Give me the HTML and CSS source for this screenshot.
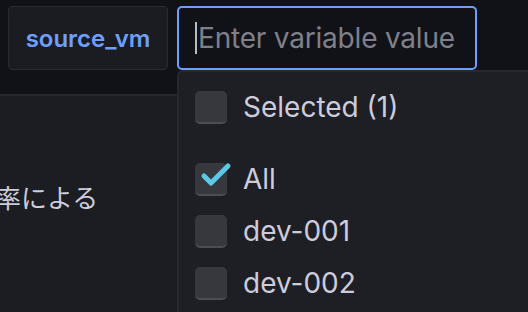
FILE: index.html
```html
<!DOCTYPE html>
<html lang="ja">
<head>
    <meta charset="UTF-8">
    <meta name="viewport" content="width=device-width, initial-scale=1.0">
    <title>Variable picker</title>
    <link rel="stylesheet" href="styles.css">
</head>
<body>

<div class="page">
    <!-- Variable toolbar -->
    <div class="toolbar">
        <div class="var-label">source_vm</div>
        <div class="var-input">
            <span class="caret"></span>
            <span class="placeholder">Enter variable value</span>
        </div>
    </div>

    <!-- Panel below the toolbar -->
    <div class="panel">
        <p class="panel-title">効率による</p>
    </div>

    <!-- Options menu -->
    <div class="menu">
        <div class="option">
            <span class="checkbox"></span>
            <span>Selected (1)</span>
        </div>
        <div class="option-group">
            <div class="option">
                <span class="checkbox checked">
                    <svg viewBox="0 0 40 28" width="40" height="28">
                        <path d="M9 15 L16 22 L33 5" fill="none" stroke="#5ac8e6" stroke-width="5" stroke-linecap="round" stroke-linejoin="round"/>
                    </svg>
                </span>
                <span>All</span>
            </div>
            <div class="option">
                <span class="checkbox"></span>
                <span>dev-001</span>
            </div>
            <div class="option">
                <span class="checkbox"></span>
                <span>dev-002</span>
            </div>
        </div>
    </div>
</div>

</body>
</html>
```

FILE: styles.css
```css
body {
    margin: 0;
    background-color: #111217;
    color: #ccccdc;
    font-family: Inter, "Noto Sans", "Noto Sans CJK JP", sans-serif;
    overflow: hidden;
}

.page {
    position: relative;
    width: 528px;
    height: 312px;
}

.toolbar {
    display: flex;
    gap: 9px;
    padding: 6px 8px 0;
    height: 64px;
}

.var-label {
    width: 160px;
    height: 64px;
    box-sizing: border-box;
    display: flex;
    align-items: center;
    justify-content: center;
    background-color: #1b1c21;
    border: 1px solid #2a2b30;
    border-radius: 4px;
    color: #6e9fff;
    font-size: 24px;
    font-weight: 600;
}

.var-input {
    width: 300px;
    height: 64px;
    box-sizing: border-box;
    display: flex;
    align-items: center;
    gap: 1px;
    padding-left: 16px;
    border: 2px solid #6e9fff;
    border-radius: 5px;
    background-color: #111217;
}

.caret {
    width: 2px;
    height: 32px;
    background-color: #b9bac4;
}

.placeholder {
    color: #7f8089;
    font-size: 28px;
    letter-spacing: -0.2px;
    white-space: nowrap;
}

.panel {
    margin-top: 24px;
    height: 218px;
    background-color: #1c1d22;
    border-top: 2px solid #26272c;
    overflow: hidden;
}

.panel-title {
    margin: 84px 0 0 -31px;
    font-family: "Noto Sans CJK JP", sans-serif;
    font-size: 26px;
    line-height: 34px;
    color: #ccccdc;
    white-space: nowrap;
}

.menu {
    position: absolute;
    left: 177px;
    top: 70px;
    right: -10px;
    bottom: -10px;
    padding-top: 9px;
    background-color: #1e1f24;
    border: 2px solid #27282d;
    border-radius: 6px;
}

.option {
    display: flex;
    align-items: center;
    gap: 16px;
    height: 52px;
    padding-left: 16px;
    font-size: 28px;
}

.option-group {
    margin-top: 20px;
}

.checkbox {
    position: relative;
    width: 32px;
    height: 33px;
    box-sizing: border-box;
    background-color: #37383d;
    border-bottom: 2px solid #4a4d52;
    border-radius: 5px;
}

.checkbox svg {
    position: absolute;
    left: 0;
    top: -2px;
}
```
